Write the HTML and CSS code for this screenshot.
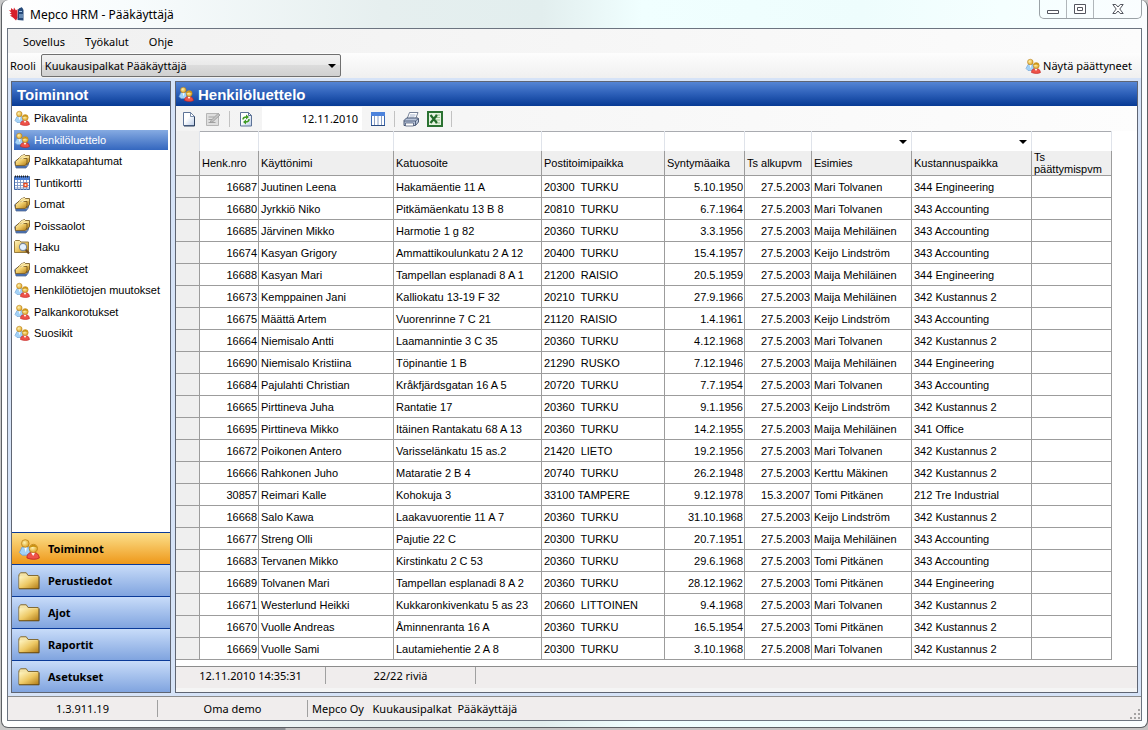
FILE: index.html
```html
<!DOCTYPE html>
<html lang="fi">
<head>
    <meta charset="UTF-8">
    <meta name="viewport" content="width=device-width, initial-scale=1.0">
    <title>Mepco HRM - Pääkäyttäjä</title>
    <link rel="stylesheet" href="styles.css">
</head>
<body>
    <!-- Icon library -->
    <svg class="icon-library" aria-hidden="true">
        <defs>
            <linearGradient id="gold" x1="0" y1="0" x2="1" y2="1">
                <stop offset="0" stop-color="#fff6c4"/>
                <stop offset="0.5" stop-color="#edc864"/>
                <stop offset="1" stop-color="#b07a14"/>
            </linearGradient>
            <linearGradient id="paper" x1="0" y1="0" x2="1" y2="1">
                <stop offset="0.4" stop-color="#ffffff"/>
                <stop offset="1" stop-color="#b9cbe6"/>
            </linearGradient>
            <radialGradient id="face" cx="0.4" cy="0.4" r="0.7">
                <stop offset="0" stop-color="#fff3b0"/>
                <stop offset="1" stop-color="#d9960f"/>
            </radialGradient>
        </defs>
        <symbol id="people" viewBox="0 0 16 16">
            <path d="M1 10.500 3 6.500h5l1 6H3z" fill="#a3d2f7" stroke="#6d9fd4" stroke-width=".6"/>
            <path d="M4.500 6.500h2l-.8 4z" fill="#fff"/>
            <circle cx="5.300" cy="4" r="2.800" fill="url(#face)" stroke="#b57a10" stroke-width=".5"/>
            <path d="M6.500 14.500c0-3 1.500-4 4.500-4s4 1.500 4.500 4c-2 1.300-6 1.300-9 0z" fill="#ee5349" stroke="#c01d1d" stroke-width=".6"/>
            <path d="M9.500 10.500h3l-1.500 2.500z" fill="#fff"/>
            <circle cx="11.200" cy="7.600" r="3" fill="url(#face)" stroke="#b57a10" stroke-width=".5"/>
            <path d="M8.300 7c.8-2.500 4.500-3 5.800 0-2-.8-3.500-.8-5.800 0z" fill="#c9900f"/>
        </symbol>
        <symbol id="cards" viewBox="0 0 16 16">
            <path d="M.5 9 3 6.500h12.500l-1.500 6-2 2.500H2z" fill="#e4ecf8" stroke="#5b6f93" stroke-width=".8"/>
            <path d="M2 13h10l3-4.500v2L12 15H2z" fill="#4a6da8"/>
            <path d="M4.500 6 7 3l3.500-1.500 1 1h4v6l-3 3.500z" fill="url(#gold)" stroke="#6e511b" stroke-width=".8"/>
            <path d="M1.500 8.500 4 6l2-1.500 1 1h6v4l-1.500 3H1.500z" fill="url(#gold)" stroke="#6e511b" stroke-width=".8"/>
            <path d="M5 5.500 8 3l3-.5M7 6l5-2h3" fill="none" stroke="#fff3bd"/>
        </symbol>
        <symbol id="calendar" viewBox="0 0 16 16">
            <path d="M.5 1.500h15v13H.5z" fill="#fff" stroke="#4169aa"/>
            <path d="M1 2h14v3H1z" fill="#4d80d8"/>
            <path d="M1 1.500h14" stroke="#222" stroke-width="2" stroke-dasharray="1 1"/>
            <path d="M1 7.500h14M1 10.500h14M1 13h14M3.500 5v10M6.500 5v10M9.500 5v10M12.500 5v10" stroke="#7c96c5" stroke-width=".9"/>
            <path d="M10 8.500h3v3h-3z" fill="#fff" stroke="#ea4a1c" stroke-width="1.300"/>
        </symbol>
        <symbol id="search" viewBox="0 0 16 16">
            <path d="M.5 13.500V2.500l1-1h4l1.500 1.500h7.500v10.500z" fill="url(#gold)" stroke="#8c7033" stroke-width=".9"/>
            <path d="m11.500 10.500 3.500 4" stroke="#6c4a22" stroke-width="2"/>
            <circle cx="9" cy="8" r="3.600" fill="#e5f1fd" stroke="#7c8796" stroke-width="1.100"/>
        </symbol>
        <symbol id="folder" viewBox="0 0 24 20">
            <path d="M1 18V3l2-2h6l2 3h11v14z" fill="#f4e3a6" stroke="#7b6025"/>
            <path d="M1.500 5h21v13.500h-21z" fill="url(#gold)"/>
            <path d="M1 18.500h22V5" fill="none" stroke="#5c3f0a"/>
        </symbol>
        <symbol id="page" viewBox="0 0 16 16">
            <path d="M2.500 1.500h7l4 4v9h-11z" fill="url(#paper)" stroke="#5d7397"/>
            <path d="M13.500 5.500v9.500H3" fill="none" stroke="#2d405f"/>
            <path d="M9.500 1.500v4h4z" fill="#fff" stroke="#5d7397" stroke-width=".8"/>
        </symbol>
        <symbol id="edit" viewBox="0 0 16 16">
            <path d="M1.500 2.500h12v12h-12z" fill="#dedede" stroke="#b5b5b5"/>
            <path d="M3.500 6h6M3.500 8.500h4M3.500 11.500h7" stroke="#a2a2a2"/>
            <path d="m6 9.500 7-7 2 1.500-7 6.500-3 1z" fill="#c4c4c4" stroke="#989898" stroke-width=".8"/>
        </symbol>
        <symbol id="refresh" viewBox="0 0 16 16">
            <path d="M2.500 1.500h8l3 3v10.500h-11z" fill="url(#paper)" stroke="#5d7397"/>
            <path d="M10.500 1.500v3h3" fill="none" stroke="#5d7397"/>
            <path d="M5 8.500c0-2 1-2.500 3.500-2.500M11 8c0 2.500-1 3-3.500 3" fill="none" stroke="#3e9b22" stroke-width="1.500"/>
            <path d="m8 3.500 3 2.500-3 2.500zM8 8.500 5 11l3 2.500z" fill="#3e9b22"/>
        </symbol>
        <symbol id="columns" viewBox="0 0 16 16">
            <path d="M1.500 1.500h13v13h-13z" fill="#fff" stroke="#3d69af"/>
            <path d="M1 1h14v4H1z" fill="#4d83dc"/>
            <path d="M4.500 5v10M8 5v10M11.500 5v10" stroke="#8ba0c5"/>
            <path d="M1 14.500h14" stroke="#2a4b83"/>
        </symbol>
        <symbol id="printer" viewBox="0 0 16 16">
            <path d="m4 8 2.500-6.500H15L12.500 8z" fill="#fff" stroke="#66748c" stroke-width=".9"/>
            <path d="M7 4h5.500M6.500 6h5" stroke="#8fa1c0" stroke-width=".8"/>
            <path d="M1 9.500 3.500 7H15l.5 1v3l-3 3.500H1z" fill="#b9c5da" stroke="#3d4c6a" stroke-width=".9"/>
            <path d="M1 10h11.500l3-2.500M12.500 10v4" fill="none" stroke="#3d4c6a" stroke-width=".8"/>
            <path d="M2.500 12h8v3h-8z" fill="#fff" stroke="#3d4c6a" stroke-width=".7"/>
        </symbol>
        <symbol id="excel" viewBox="0 0 16 16">
            <path d="M1 1h14v14H1z" fill="#e6f3e1" stroke="#2b7232" stroke-width="2"/>
            <path d="M8 4h5M9 6.500h4M9 9h4M8 12h5" stroke="#8cba82" stroke-width=".9"/>
            <path d="m3.500 4 6.500 8M10 4l-6.500 8" stroke="#236b2a" stroke-width="2.200"/>
        </symbol>
        <symbol id="logo" viewBox="0 0 16 16">
            <path d="m0 4 2 .5L2 2l2.500 2L5 1.500l2 3L8.500 3v9L7 14.500 4.500 12 1 9.500l2-.5L.5 7l2 0z" fill="#d5202c"/>
            <path d="M9 3.500 10.500 2h1L12 1l1.500 1 1 2v10.500L8.500 14z" fill="#254979"/>
            <path d="M10 5.500h3M11 8v4M13 8v4" stroke="#a8cdf1"/>
        </symbol>
    </svg>

    <div class="window">
        <header class="titlebar">
            <svg class="icon"><use href="#logo"/></svg>
            <h1>Mepco HRM - Pääkäyttäjä</h1>
            <div class="window-buttons">
                <button type="button" aria-label="Pienennä">
                    <svg width="12" height="12" viewBox="0 0 12 12"><path d="M.5 7.500h11v3H.5z" fill="#fff" stroke="#53565f"/></svg>
                </button>
                <button type="button" aria-label="Suurenna">
                    <svg width="12" height="12" viewBox="0 0 12 12"><path d="M.5 1.500h11v9H.5zM3.500 4.500h5v3h-5z" fill="#fff" stroke="#53565f"/></svg>
                </button>
                <button type="button" class="close" aria-label="Sulje">
                    <svg width="12" height="12" viewBox="0 0 12 12"><path d="M.8 1.500h3L6 4l2.200-2.500h3L7.800 6l3.400 4.500h-3L6 8l-2.200 2.500h-3L4.200 6z" fill="#fff" stroke="#53565f"/></svg>
                </button>
            </div>
        </header>

        <div class="client">
            <nav class="menubar">
                <button type="button">Sovellus</button>
                <button type="button">Työkalut</button>
                <button type="button">Ohje</button>
            </nav>

            <div class="rolebar">
                <label for="role">Rooli</label>
                <select id="role">
                    <option>Kuukausipalkat Pääkäyttäjä</option>
                </select>
                <button type="button" class="show-ended">
                    <svg class="icon"><use href="#people"/></svg>
                    Näytä päättyneet
                </button>
            </div>

            <div class="workspace">
                <aside class="panel sidebar">
                    <h2>Toiminnot</h2>
                    <ul class="functions">
                        <li><a href="#"><svg class="icon"><use href="#people"/></svg>Pikavalinta</a></li>
                        <li><a href="#" class="active"><svg class="icon"><use href="#people"/></svg>Henkilöluettelo</a></li>
                        <li><a href="#"><svg class="icon"><use href="#cards"/></svg>Palkkatapahtumat</a></li>
                        <li><a href="#"><svg class="icon"><use href="#calendar"/></svg>Tuntikortti</a></li>
                        <li><a href="#"><svg class="icon"><use href="#cards"/></svg>Lomat</a></li>
                        <li><a href="#"><svg class="icon"><use href="#cards"/></svg>Poissaolot</a></li>
                        <li><a href="#"><svg class="icon"><use href="#search"/></svg>Haku</a></li>
                        <li><a href="#"><svg class="icon"><use href="#cards"/></svg>Lomakkeet</a></li>
                        <li><a href="#"><svg class="icon"><use href="#people"/></svg>Henkilötietojen muutokset</a></li>
                        <li><a href="#"><svg class="icon"><use href="#people"/></svg>Palkankorotukset</a></li>
                        <li><a href="#"><svg class="icon"><use href="#people"/></svg>Suosikit</a></li>
                    </ul>
                    <div class="groups">
                        <button type="button" class="active"><svg><use href="#people"/></svg>Toiminnot</button>
                        <button type="button"><svg><use href="#folder"/></svg>Perustiedot</button>
                        <button type="button"><svg><use href="#folder"/></svg>Ajot</button>
                        <button type="button"><svg><use href="#folder"/></svg>Raportit</button>
                        <button type="button"><svg><use href="#folder"/></svg>Asetukset</button>
                    </div>
                </aside>

                <main class="panel content">
                    <h2><svg class="icon"><use href="#people"/></svg>Henkilöluettelo</h2>
                    <div class="toolbar">
                        <button type="button" aria-label="Uusi"><svg class="icon"><use href="#page"/></svg></button>
                        <button type="button" aria-label="Muokkaa" disabled><svg class="icon"><use href="#edit"/></svg></button>
                        <span class="separator"></span>
                        <button type="button" aria-label="Päivitä"><svg class="icon"><use href="#refresh"/></svg></button>
                        <input type="text" class="date" aria-label="Päivä" value="12.11.2010">
                        <button type="button" aria-label="Sarakkeet"><svg class="icon"><use href="#columns"/></svg></button>
                        <span class="separator"></span>
                        <button type="button" aria-label="Tulosta"><svg class="icon"><use href="#printer"/></svg></button>
                        <button type="button" aria-label="Vie Exceliin"><svg class="icon"><use href="#excel"/></svg></button>
                        <span class="separator"></span>
                    </div>

                    <div class="grid">
                        <table>
                            <colgroup>
                                <col class="col-mark"><col class="col-id"><col class="col-name"><col class="col-street"><col class="col-city">
                                <col class="col-born"><col class="col-start"><col class="col-boss"><col class="col-cost"><col class="col-end">
                            </colgroup>
                            <thead>
                                <tr class="filters">
                                    <td></td>
                                    <td><input type="text" aria-label="Suodata Henk.nro"></td>
                                    <td><input type="text" aria-label="Suodata Käyttönimi"></td>
                                    <td><input type="text" aria-label="Suodata Katuosoite"></td>
                                    <td><input type="text" aria-label="Suodata Postitoimipaikka"></td>
                                    <td><input type="text" aria-label="Suodata Syntymäaika"></td>
                                    <td><input type="text" aria-label="Suodata Ts alkupvm"></td>
                                    <td><select aria-label="Suodata Esimies"><option></option></select></td>
                                    <td><select aria-label="Suodata Kustannuspaikka"><option></option></select></td>
                                    <td><input type="text" aria-label="Suodata Ts päättymispvm"></td>
                                </tr>
                                <tr>
                                    <th></th>
                                    <th>Henk.nro</th>
                                    <th>Käyttönimi</th>
                                    <th>Katuosoite</th>
                                    <th>Postitoimipaikka</th>
                                    <th>Syntymäaika</th>
                                    <th>Ts alkupvm</th>
                                    <th>Esimies</th>
                                    <th>Kustannuspaikka</th>
                                    <th class="two-lines">Ts päättymispvm</th>
                                </tr>
                            </thead>
                            <tbody id="rows"></tbody>
                        </table>
                    </div>

                    <footer class="statusbar list-status">
                        <span>12.11.2010 14:35:31</span>
                        <span>22/22 riviä</span>
                    </footer>
                </main>
            </div>

            <footer class="statusbar app-status">
                <span>1.3.911.19</span>
                <span>Oma demo</span>
                <span class="session">Mepco Oy &nbsp; Kuukausipalkat &nbsp;Pääkäyttäjä</span>
                <svg class="grip" width="12" height="12" viewBox="0 0 12 12"><path d="M9 1h2v2H9zM5 5h2v2H5zM9 5h2v2H9zM1 9h2v2H1zM5 9h2v2H5zM9 9h2v2H9z" fill="#a5a3a3"/></svg>
            </footer>
        </div>
    </div>

    <script>
        const people = [
            ['16687', 'Juutinen Leena', 'Hakamäentie 11 A', '20300  TURKU', '5.10.1950', '27.5.2003', 'Mari Tolvanen', '344 Engineering'],
            ['16680', 'Jyrkkiö Niko', 'Pitkämäenkatu 13 B 8', '20810  TURKU', '6.7.1964', '27.5.2003', 'Mari Tolvanen', '343 Accounting'],
            ['16685', 'Järvinen Mikko', 'Harmotie 1 g 82', '20360  TURKU', '3.3.1956', '27.5.2003', 'Maija Mehiläinen', '343 Accounting'],
            ['16674', 'Kasyan Grigory', 'Ammattikoulunkatu 2 A 12', '20400  TURKU', '15.4.1957', '27.5.2003', 'Keijo Lindström', '343 Accounting'],
            ['16688', 'Kasyan Mari', 'Tampellan esplanadi 8 A 1', '21200  RAISIO', '20.5.1959', '27.5.2003', 'Maija Mehiläinen', '344 Engineering'],
            ['16673', 'Kemppainen Jani', 'Kalliokatu 13-19 F 32', '20210  TURKU', '27.9.1966', '27.5.2003', 'Maija Mehiläinen', '342 Kustannus 2'],
            ['16675', 'Määttä Artem', 'Vuorenrinne 7 C 21', '21120  RAISIO', '1.4.1961', '27.5.2003', 'Keijo Lindström', '343 Accounting'],
            ['16664', 'Niemisalo Antti', 'Laamannintie 3 C 35', '20360  TURKU', '4.12.1968', '27.5.2003', 'Mari Tolvanen', '342 Kustannus 2'],
            ['16690', 'Niemisalo Kristiina', 'Töpinantie 1 B', '21290  RUSKO', '7.12.1946', '27.5.2003', 'Maija Mehiläinen', '344 Engineering'],
            ['16684', 'Pajulahti Christian', 'Kråkfjärdsgatan 16 A 5', '20720  TURKU', '7.7.1954', '27.5.2003', 'Mari Tolvanen', '343 Accounting'],
            ['16665', 'Pirttineva Juha', 'Rantatie 17', '20360  TURKU', '9.1.1956', '27.5.2003', 'Keijo Lindström', '342 Kustannus 2'],
            ['16695', 'Pirttineva Mikko', 'Itäinen Rantakatu 68 A 13', '20360  TURKU', '14.2.1955', '27.5.2003', 'Maija Mehiläinen', '341 Office'],
            ['16672', 'Poikonen Antero', 'Varisselänkatu 15 as.2', '21420  LIETO', '19.2.1956', '27.5.2003', 'Mari Tolvanen', '342 Kustannus 2'],
            ['16666', 'Rahkonen Juho', 'Mataratie 2 B 4', '20740  TURKU', '26.2.1948', '27.5.2003', 'Kerttu Mäkinen', '342 Kustannus 2'],
            ['30857', 'Reimari Kalle', 'Kohokuja 3', '33100 TAMPERE', '9.12.1978', '15.3.2007', 'Tomi Pitkänen', '212 Tre Industrial'],
            ['16668', 'Salo Kawa', 'Laakavuorentie 11 A 7', '20360  TURKU', '31.10.1968', '27.5.2003', 'Keijo Lindström', '342 Kustannus 2'],
            ['16677', 'Streng Olli', 'Pajutie 22 C', '20300  TURKU', '20.7.1951', '27.5.2003', 'Maija Mehiläinen', '343 Accounting'],
            ['16683', 'Tervanen Mikko', 'Kirstinkatu 2 C 53', '20360  TURKU', '29.6.1968', '27.5.2003', 'Tomi Pitkänen', '343 Accounting'],
            ['16689', 'Tolvanen Mari', 'Tampellan esplanadi 8 A 2', '20360  TURKU', '28.12.1962', '27.5.2003', 'Tomi Pitkänen', '344 Engineering'],
            ['16671', 'Westerlund Heikki', 'Kukkaronkivenkatu 5 as 23', '20660  LITTOINEN', '9.4.1968', '27.5.2003', 'Mari Tolvanen', '342 Kustannus 2'],
            ['16670', 'Vuolle Andreas', 'Åminnenranta 16 A', '20360  TURKU', '16.5.1954', '27.5.2003', 'Tomi Pitkänen', '342 Kustannus 2'],
            ['16669', 'Vuolle Sami', 'Lautamiehentie 2 A 8', '20300  TURKU', '3.10.1968', '27.5.2008', 'Mari Tolvanen', '342 Kustannus 2']
        ];

        const rightAligned = [0, 4, 5];
        const rows = document.getElementById('rows');

        people.forEach((person) => {
            const tr = rows.insertRow();
            tr.insertCell().className = 'mark';
            person.forEach((value, i) => {
                const td = tr.insertCell();
                td.textContent = value;
                if (rightAligned.includes(i)) {
                    td.className = 'number';
                }
            });
            tr.insertCell();
        });
    </script>
</body>
</html>
```
FILE: styles.css
```css
* {
    box-sizing: border-box;
}

body {
    margin: 0;
    min-height: 100vh;
    display: flex;
    flex-direction: column;
    padding: 0 0 2px 1px;
    background: linear-gradient(90deg, #c9c9c9 40px, #7d8287 40px, #8c8f93 285px, #c5c3c3 286px);
    font-family: "Noto Sans", "Open Sans", sans-serif;
    font-size: 11px;
    color: #000;
}

button,
input,
select {
    font: inherit;
    color: inherit;
    border: none;
    border-radius: 0;
    background: none;
    margin: 0;
    padding: 0;
    outline: none;
}

h1,
h2,
ul {
    margin: 0;
    padding: 0;
    font-weight: normal;
}

.icon-library {
    position: absolute;
    width: 0;
    height: 0;
}

.icon {
    width: 16px;
    height: 16px;
    flex: none;
}

/* Window frame */
.window {
    flex: 1;
    display: flex;
    flex-direction: column;
    padding: 0 5px 6px;
    border: 1px solid #5d6064;
    border-top: none;
    border-radius: 7px;
    background: linear-gradient(90deg, #fff 0, #f8fcfd 120px, #e6efef 380px, #e2eeee 540px, #f0ffff 640px, #eefdfd 860px, #f5ffff 1000px, #fafdff);
}

.titlebar {
    height: 28px;
    display: flex;
    align-items: center;
    gap: 5px;
    padding-left: 2px;
}

.titlebar h1 {
    flex: 1;
    font-size: 12px;
}

.window-buttons {
    align-self: flex-start;
    display: flex;
    height: 19px;
    border: 1px solid #9aa1a6;
    border-top: none;
    border-radius: 0 0 5px 5px;
}

.window-buttons button {
    width: 27px;
    display: flex;
    align-items: center;
    justify-content: center;
    border-right: 1px solid #b0b6ba;
}

.window-buttons .close {
    width: 47px;
    border-right: none;
}

.client {
    flex: 1;
    display: flex;
    flex-direction: column;
    border: 1px solid #6c7480;
    background: #d6e3f7;
}

/* Menu and role selection */
.menubar {
    height: 24px;
    display: flex;
    align-items: center;
    gap: 20px;
    padding-left: 15px;
    background: linear-gradient(90deg, #f0f0f0, #fcfcfc);
}

.rolebar {
    height: 25px;
    display: flex;
    align-items: center;
    gap: 5px;
    padding: 0 9px 0 2px;
    background: linear-gradient(#fdfdfd, #f0f0f0);
}

.rolebar select {
    width: 300px;
    height: 23px;
    padding: 0 3px;
    appearance: none;
    border: 1px solid #707070;
    border-radius: 2px;
    background: url("data:image/svg+xml,%3Csvg xmlns='http://www.w3.org/2000/svg' width='8' height='4'%3E%3Cpath d='M0 0h8L4 4z'/%3E%3C/svg%3E") no-repeat right 4px center, linear-gradient(#f2f2f2, #e9e9e9 50%, #dcdcdc 50%, #d0d0d0);
}

.show-ended {
    display: flex;
    align-items: center;
    gap: 2px;
    margin-left: auto;
}

/* Panels */
.workspace {
    flex: 1;
    display: flex;
    gap: 4px;
    padding: 3px 3px 3px 3px;
}

.panel {
    display: flex;
    flex-direction: column;
    border: 1px solid #5f6573;
    background: #fff;
}

.panel h2 {
    height: 24px;
    display: flex;
    align-items: center;
    gap: 4px;
    padding-left: 5px;
    background: linear-gradient(#5585d4, #2c5fb8 50%, #073a94);
    color: #fff;
    font-family: "Liberation Sans", Arial, sans-serif;
    font-size: 15px;
    font-weight: bold;
}

.sidebar {
    width: 160px;
    flex: none;
}

.content {
    flex: 1;
    min-width: 0;
}

.content h2 {
    padding-left: 2px;
}

/* Function list */
.functions {
    flex: 1;
    padding: 2px;
    list-style: none;
    font-family: "Liberation Sans", Arial, sans-serif;
}

.functions li {
    height: 22px;
}

.functions li:nth-child(even) {
    height: 21px;
}

.functions a {
    height: 20px;
    display: flex;
    align-items: center;
    gap: 4px;
    color: #000;
    text-decoration: none;
    white-space: nowrap;
}

.functions .active {
    background: linear-gradient(#86abe2, #3467bf);
    color: #fff;
}

.groups button {
    width: 100%;
    height: 32px;
    display: flex;
    align-items: center;
    gap: 8px;
    padding-left: 6px;
    border-top: 1px solid #0a3a98;
    background: linear-gradient(#c8dcf9, #80a4df);
    font-weight: bold;
}

.groups svg {
    width: 22px;
    height: 22px;
}

.groups .active {
    background: linear-gradient(#fce08c, #ee9819);
}

/* Toolbar */
.toolbar {
    height: 25px;
    display: flex;
    align-items: center;
    gap: 8px;
    padding-left: 5px;
    background: linear-gradient(90deg, #f3f3f3, #fdfdfd);
}

.toolbar button,
.toolbar svg {
    display: block;
}

.separator {
    width: 1px;
    height: 16px;
    background: #c2c2c2;
}

.date {
    width: 100px;
    height: 23px;
    padding-right: 4px;
    background: #fff;
    text-align: right;
}

/* Person grid */
.grid {
    flex: 1;
    font-family: "Liberation Sans", Arial, sans-serif;
}

table {
    width: 936px;
    table-layout: fixed;
    border-collapse: separate;
    border-spacing: 0;
}

.col-mark { width: 24px; }
.col-id { width: 59px; }
.col-name { width: 135px; }
.col-street { width: 148px; }
.col-city { width: 123px; }
.col-born { width: 80px; }
.col-start { width: 67px; }
.col-boss { width: 100px; }
.col-cost { width: 120px; }
.col-end { width: 80px; }

td,
th {
    height: 22px;
    padding: 0 2px;
    border-right: 1px solid #9c9c9c;
    border-bottom: 1px solid #9c9c9c;
    font-weight: normal;
    text-align: left;
    white-space: pre;
    overflow: hidden;
}

th {
    height: 24px;
    background: #efefef;
}

.two-lines {
    line-height: 12px;
    white-space: normal;
}

.mark {
    background: #efefef;
}

.number {
    padding-right: 1px;
    text-align: right;
}

.filters td {
    height: 20px;
    padding: 0;
    border-right: 1px solid #dfe3ea;
    border-bottom: none;
    background: #efefef;
}

.filters input,
.filters select {
    display: block;
    width: 100%;
    height: 20px;
    appearance: none;
    border-top: 1px solid #a9abb0;
    background: #fff;
}

.filters select {
    background: #fff url("data:image/svg+xml,%3Csvg xmlns='http://www.w3.org/2000/svg' width='8' height='4'%3E%3Cpath d='M0 0h8L4 4z'/%3E%3C/svg%3E") no-repeat right 4px center;
}

/* Status bars */
.statusbar {
    display: flex;
    align-items: center;
    border-top: 1px solid #8c8c8c;
    background: #f0eded;
}

.statusbar span {
    width: 150px;
    height: 17px;
    line-height: 17px;
    border-right: 1px solid #a0a0a0;
    text-align: center;
}

.list-status {
    height: 26px;
    padding-bottom: 4px;
    border-bottom: 4px solid #f5f5f5;
}

.app-status {
    height: 24px;
}

.statusbar .session {
    width: auto;
    flex: 1;
    padding-left: 4px;
    border-right: none;
    text-align: left;
}

.grip {
    align-self: flex-end;
}
```
